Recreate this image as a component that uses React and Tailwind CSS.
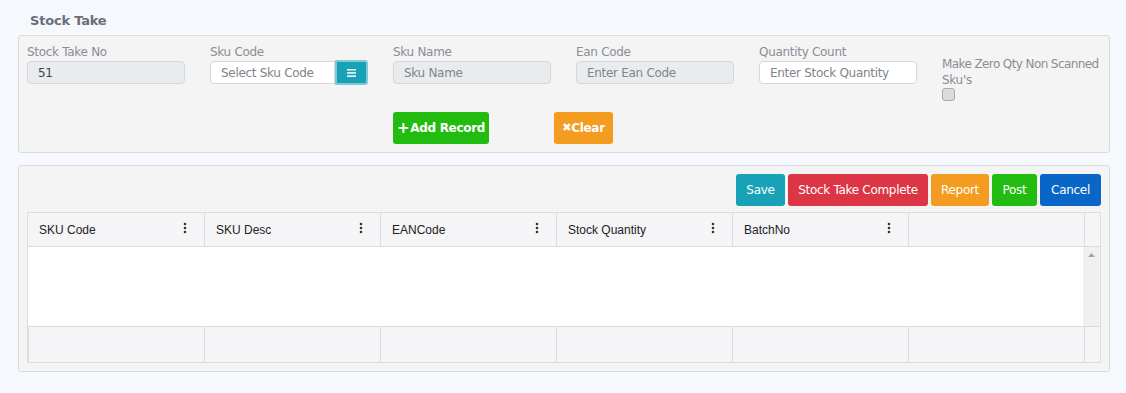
import React from 'react';

const cols = ['SKU Code', 'SKU Desc', 'EANCode', 'Stock Quantity', 'BatchNo'];

function Kebab() {
  return (
    <svg width="4" height="12" viewBox="0 0 4 12" className="text-[#333]">
      <circle cx="2" cy="2" r="1.3" fill="currentColor" />
      <circle cx="2" cy="6" r="1.3" fill="currentColor" />
      <circle cx="2" cy="10" r="1.3" fill="currentColor" />
    </svg>
  );
}

function Field({ label, placeholder, value, disabled }) {
  return (
    <div className="w-[158px]">
      <label className="block text-[12px] leading-[16px] text-[#8a8d96] mb-[1px]">{label}</label>
      <div
        className={`h-[23px] rounded-[4px] border border-[#d5d7da] px-[10px] flex items-center text-[12px] ${
          disabled ? 'bg-[#e9ecef]' : 'bg-white'
        } ${value ? 'text-[#444]' : 'text-[#80848c]'}`}
      >
        {value || placeholder}
      </div>
    </div>
  );
}

function App() {
  return (
    <div className="min-h-screen bg-[#f5f8fc] font-['DejaVu_Sans','Open_Sans',sans-serif] pt-[12px] px-[18px] pb-[21px]" style={{ width: 1126, height: 393 }}>
      <h1 className="pl-[12px] text-[13px] font-semibold text-[#6b6e7a] leading-[18px] mb-[5px] tracking-[-0.2px]">Stock Take</h1>

      {/* Form panel */}
      <div className="w-[1092px] h-[118px] bg-[#f4f4f4] border border-[#dcdcdc] rounded-[3px] pl-[8px] pt-[8px]">
        <div className="flex gap-[25px] tracking-[-0.3px]">
          <Field label="Stock Take No" value="51" disabled />
          <div className="w-[158px]">
            <label className="block text-[12px] leading-[16px] text-[#8a8d96] mb-[1px]">Sku Code</label>
            <div className="flex">
              <div className="h-[23px] w-[127px] rounded-l-[4px] border border-[#d5d7da] bg-white px-[10px] flex items-center text-[12px] text-[#80848c]">Select Sku Code</div>
              <button className="h-[25px] -mt-px w-[33px] bg-[#17a2b8] rounded-r-[3px] border-2 border-[#7fcad6] flex items-center justify-center">
                <svg width="9" height="8" viewBox="0 0 9 8">
                  <rect x="0" y="0" width="9" height="1.5" fill="white" />
                  <rect x="0" y="3.2" width="9" height="1.5" fill="white" />
                  <rect x="0" y="6.4" width="9" height="1.5" fill="white" />
                </svg>
              </button>
            </div>
          </div>
          <Field label="Sku Name" placeholder="Sku Name" disabled />
          <Field label="Ean Code" placeholder="Enter Ean Code" disabled />
          <Field label="Quantity Count" placeholder="Enter Stock Quantity" />
          <div className="w-[160px] pt-[12px] shrink-0">
            <p className="text-[12px] leading-[16px] text-[#8a8d96] tracking-[-0.6px] whitespace-nowrap">Make Zero Qty Non Scanned</p>
            <p className="text-[12px] leading-[16px] text-[#8a8d96]">Sku's</p>
            <div className="w-[13px] h-[13px] rounded-[3px] border border-[#aaa] bg-[#dcdcdc]" />
          </div>
        </div>
        <div className="flex ml-[366px] mt-[11px] gap-[65px]">
          <button className="h-[32px] w-[96px] bg-[#22bb10] rounded-[3px] text-white text-[12px] font-semibold flex items-center justify-center tracking-[-0.3px]">
            <span className="text-[15px] font-bold mr-[1px] leading-none">+</span>Add Record
          </button>
          <button className="h-[32px] w-[59px] bg-[#f39c1f] rounded-[3px] text-white text-[12px] font-semibold flex items-center justify-center tracking-[-0.3px]">
            <span className="font-bold text-[11px]">✖</span>Clear
          </button>
        </div>
      </div>

      {/* Grid panel */}
      <div className="w-[1092px] mt-[12px] bg-[#f4f4f4] border border-[#dcdcdc] rounded-[3px] pl-[8px] pr-[8px] pt-[8px] pb-[8px]">
        <div className="flex justify-end gap-[3px] text-white text-[12px] tracking-[-0.3px]">
          <button className="h-[32px] w-[49px] bg-[#17a2b8] rounded-[3px]">Save</button>
          <button className="h-[32px] w-[140px] bg-[#dc3545] rounded-[3px]">Stock Take Complete</button>
          <button className="h-[32px] w-[58px] bg-[#f39c1f] rounded-[3px]">Report</button>
          <button className="h-[32px] w-[45px] bg-[#22bb10] rounded-[3px]">Post</button>
          <button className="h-[32px] w-[61px] bg-[#0a66c6] rounded-[3px]">Cancel</button>
        </div>

        <div className="mt-[6px] border border-[#dcdce0] bg-white font-['Liberation_Sans',Arial,sans-serif]">
          <div className="flex h-[34px] bg-[#f5f5f8] border-b border-[#dcdce0]">
            {cols.map((c, i) => (
              <div key={c} className={`${i === 0 ? 'w-[177px]' : 'w-[176px]'} border-r border-[#dcdce0] flex items-center justify-between pl-[11px] pr-[17px] text-[12px] text-[#222]`}>
                <span className="mt-[1px]">{c}</span>
                <span className="-mt-[4px]"><Kebab /></span>
              </div>
            ))}
            <div className="w-[176px] border-r border-[#dcdce0]" />
            <div className="flex-1" />
          </div>
          <div className="flex h-[79px]">
            <div className="flex-1 bg-white" />
            <div className="w-[17px] bg-[#f0f0f0] flex justify-center pt-[6px]">
              <svg width="7" height="4" viewBox="0 0 7 4">
                <path d="M0 4 L3.5 0 L7 4 Z" fill="#a3a3a3" />
              </svg>
            </div>
          </div>
          <div className="flex h-[36px] bg-[#f5f5f8] border-t border-[#dcdce0]">
            {[0, 1, 2, 3, 4, 5].map((i) => (
              <div key={i} className={`${i === 0 ? 'w-[177px] border-l border-l-[#dcdce0]' : 'w-[176px]'} border-r border-[#dcdce0]`} />
            ))}
            <div className="flex-1" />
          </div>
        </div>
      </div>
    </div>
  );
}

export default App;
